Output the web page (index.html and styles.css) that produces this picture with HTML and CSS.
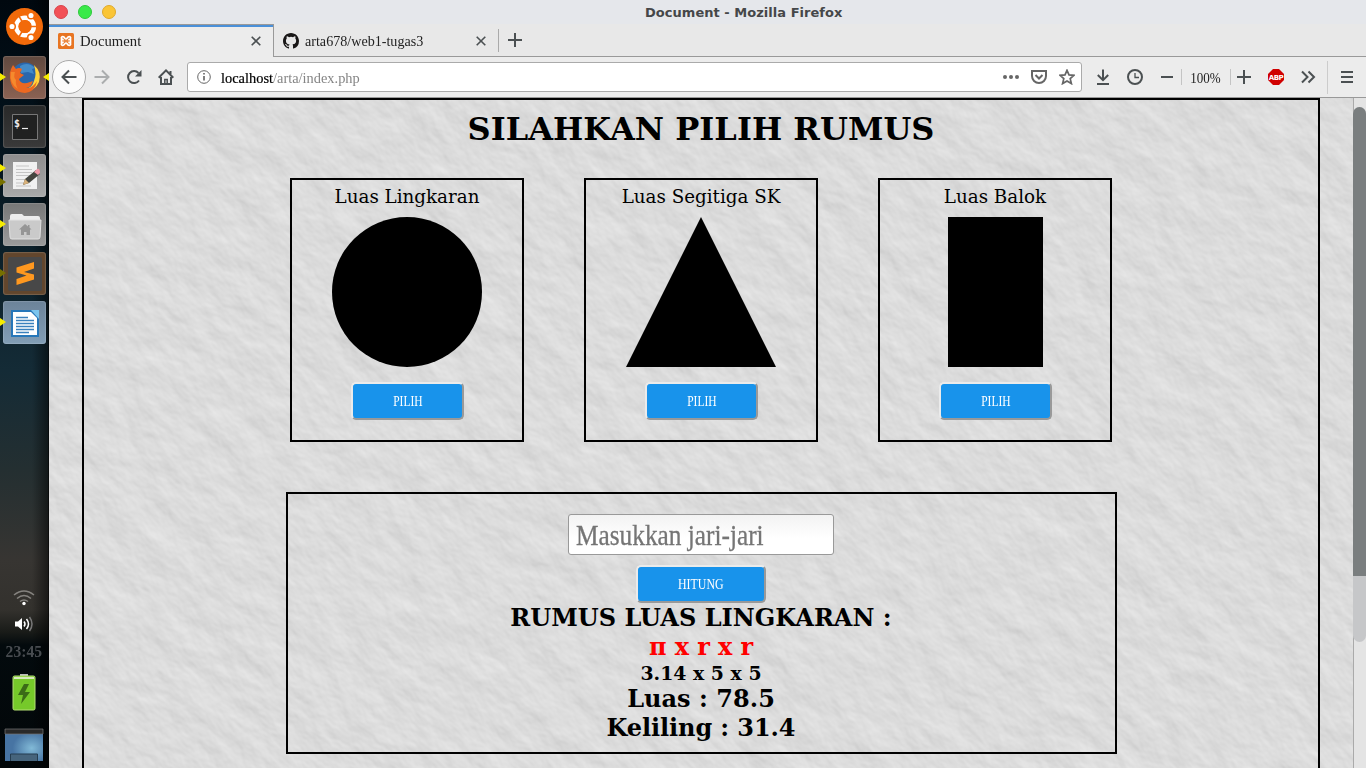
FILE: index.html
```
<!DOCTYPE html>
<html lang="id">
<head>
<meta charset="utf-8">
<title>Document</title>
<link rel="stylesheet" href="styles.css">
</head>
<body>
<div class="desktop">
  <aside class="launcher">
    <svg class="ubuntu" viewBox="0 0 50 50"><circle cx="24.500" cy="26.500" r="18.500" fill="#f26a0a"/><circle cx="25" cy="26.500" r="8.800" fill="none" stroke="#fff" stroke-width="4.500"/><g stroke="#f26a0a" stroke-width="1.500"><path d="M25 26.500l-7 12M25 26.500l-7-12M25 26.500h14" fill="none"/><circle cx="12" cy="26.500" r="3.300" fill="#fff"/><circle cx="31" cy="15.500" r="3.300" fill="#fff"/><circle cx="31" cy="37.500" r="3.300" fill="#fff"/></g><circle cx="25" cy="26.500" r="6.500" fill="#f26a0a"/></svg>
    <div class="tile tile-firefox"><i class="run"></i><i class="run active"></i>
      <svg viewBox="0 0 43 43"><circle cx="22" cy="20" r="13.500" fill="#2a67ad"/><path d="M17 10q8-5 15 2l-3 1 2 5-6-2-7 1z" fill="#438bc9"/><path d="M31 9q8 7 5 17-5 11-17 8 10-1 12-9 3-7 0-16z" fill="#ffd33c"/><path d="M8 13l2-4 3 4q3-2 6 0l-2 4 4 2-5 4q1 5 8 4l6-2q-2 7-7 7 6 1 11-7-2 11-12 12Q8 36 7 22q-1-5 1-9z" fill="#ec6821"/><path d="M8 16q-2 12 7 17-3-5-2-9-3-3-1-8z" fill="#f58a2d"/></svg></div>
    <div class="tile tile-terminal"><svg viewBox="0 0 43 43"><path d="M9.500 9.500h25v25h-25z" fill="#202121" stroke="#777" /><text x="11" y="22" class="prompt">$</text><path d="M19 23.500h6" stroke="#eee" stroke-width="1.200"/></svg></div>
    <div class="tile tile-editor"><i class="run high"></i><i class="run low dim"></i><svg viewBox="0 0 43 43"><path d="M10 8h24v27H10z" fill="#f1f1f1"/><path d="M13 12h13M13 15.500h16M13 18.500h16M13 21.500h14M13 25.500h9M13 29h8M13 32h15" stroke="#c5c5c5"/><path d="M20 31l2-6 11-9 4 4-11 9z" fill="#454640"/><path d="M20 31l2-6 4 4z" fill="#d8b17a"/><path d="M31 18l3-3q3-1 3 4l-2 2z" fill="#ed9aa9"/></svg></div>
    <div class="tile tile-files"><i class="run"></i><svg viewBox="0 0 43 43"><path d="M7 13q0-2 2-2h10l2 2h14q2 0 2 2v6H7z" fill="#ededed"/><path d="M6 17h32l-1 17q0 2-2 2H9q-2 0-2-2z" fill="#cacaca" stroke="#e2e2e2"/><path d="M22 21l-6 5.500h2V32h3v-3h2.500v3H27v-5.500h1.500l-2-2V22h-1.500v1.500z" fill="#969696"/></svg></div>
    <div class="tile tile-sublime"><i class="run dim"></i><svg viewBox="0 0 43 43"><rect x="5" y="5" width="34" height="34" rx="2" fill="#484848"/><path d="M13.500 15.500L31 10v6.500l-10 3.500 10 2.500v5L13.500 33v-6l10-3.500-10-3z" fill="#ff981f"/></svg></div>
    <div class="tile tile-writer"><i class="run"></i><svg viewBox="0 0 43 43"><path d="M8 9h28v27H8z" fill="#2777b9"/><path d="M10 11h18l6 6v17H10z" fill="#fff"/><path d="M28 9h8v9z" fill="#7dc5ed"/><path d="M13 16.500h12M13 19.500h18M13 22.500h18M13 25.500h18M13 28.500h18M13 31.500h13" stroke="#3a81bd" stroke-width="1.300"/></svg></div>
    <div class="tray">
      <svg class="wifi" viewBox="0 0 22 18"><g fill="none" stroke="#85837f" stroke-width="1.500"><path d="M1 6q10-8 20 0M4 9.500q7-6 14 0M7 12.500q4-3 8 0"/></g><circle cx="11" cy="14.500" r="1.700" fill="#fff"/></svg>
      <svg class="volume" viewBox="0 0 20 16"><path d="M1 5.500h3L8 2v12l-4-3.500H1z" fill="#fff"/><g fill="none" stroke="#fff" stroke-width="1.500"><path d="M10 5.500q2 2.500 0 5M12.500 3q4 5 0 10"/><path d="M15.500 1q5 7 0 14" stroke="#777"/></g></svg>
      <span class="clock">23:45</span>
      <svg class="battery" viewBox="0 0 24 40"><path d="M8 2h8v4H8z" fill="#bbb"/><rect x="1" y="4" width="22" height="34" rx="1.500" fill="#76c92a" stroke="#b4df74"/><path d="M2 5h20v2H2z" fill="#d7e8bd"/><path d="M12 12l-6 11h5l-2 9 9-12h-5l4-8z" fill="#3b6b17"/></svg>
      <svg class="show-desktop" viewBox="0 0 40 34"><defs><radialGradient id="desk" cx=".7" cy=".6"><stop offset="0" stop-color="#82bad7"/><stop offset="1" stop-color="#4774a3"/></radialGradient></defs><path d="M1 1h38v32H1z" fill="url(#desk)"/><path d="M1 1h38v5H1z" fill="#292929" stroke="#777" stroke-width=".7"/><path d="M6.500 33v-7h27v7" fill="#46647c" stroke="#253d50"/></svg>
    </div>
  </aside>

  <main class="browser">
    <header class="titlebar"><span class="dot red"></span><span class="dot green"></span><span class="dot yellow"></span><span class="window-title">Document - Mozilla Firefox</span></header>
    <nav class="tabs">
      <div class="tab selected"><svg class="favicon" viewBox="0 0 16 16"><rect width="16" height="16" rx="1.500" fill="#e87522"/><path d="M6 8h4M5.800 6.700C3 7 2.500 3.700 4.800 3.700S6.500 6 8 6s1-2.300 3.200-2.300S13 7 10.200 6.700M5.800 9.300C3 9 2.500 12.300 4.800 12.300S6.500 10 8 10s1 2.300 3.200 2.300S13 9 10.200 9.300M3.500 6v4M12.500 6v4" fill="none" stroke="#fff" stroke-width="1.700"/><path d="M6 8h4" stroke="#e87522" stroke-width="1.600"/></svg><span class="tab-label">Document</span><svg class="close" viewBox="0 0 10 10"><path d="M.7.700l8.600 8.600M9.300.700L.7 9.300"/></svg></div>
      <div class="tab"><svg class="favicon" viewBox="0 0 16 16"><path fill="#191717" d="M8 0C3.580 0 0 3.580 0 8c0 3.540 2.290 6.530 5.470 7.590.4.070.55-.17.550-.38v-1.490c-2.010.37-2.530-.49-2.690-.94-.09-.23-.48-.94-.82-1.130-.28-.15-.68-.52-.01-.53.63-.01 1.080.58 1.230.82.720 1.210 1.870.87 2.330.66.070-.52.280-.87.510-1.070-1.780-.2-3.640-.89-3.640-3.950 0-.87.310-1.590.82-2.150-.08-.2-.36-1.020.08-2.120 0 0 .67-.21 2.200.82a7.700 7.700 0 0 1 4 0c1.530-1.040 2.200-.82 2.200-.82.440 1.100.16 1.920.08 2.120.51.560.82 1.270.82 2.150 0 3.070-1.870 3.750-3.650 3.950.29.250.54.730.54 1.480v2.190c0 .21.150.46.550.38A8 8 0 0 0 16 8c0-4.420-3.580-8-8-8z"/></svg><span class="tab-label second">arta678/web1-tugas3</span><svg class="close" viewBox="0 0 10 10"><path d="M.7.700l8.600 8.600M9.300.700L.7 9.300"/></svg></div>
      <svg class="newtab" viewBox="0 0 14 14"><path d="M7 0v14M0 7h14"/></svg>
    </nav>
    <div class="toolbar">
      <span class="back"><svg class="icon" viewBox="0 0 16 16"><path d="M15.500 8H1.500M8 1.500L1.500 8 8 14.500"/></svg></span>
      <span class="cell fade"><svg class="icon" viewBox="0 0 16 16"><path d="M.5 8h14M8 1.500L14.500 8 8 14.500"/></svg></span>
      <span class="cell"><svg class="icon" viewBox="0 0 16 16"><path d="M13 11.500A6 6 0 1 1 12.500 4"/><path d="M15.500 1v6.500H9z" fill="#4b5052" stroke="none"/></svg></span>
      <span class="cell"><svg class="icon" viewBox="0 0 16 16"><path d="M.7 8.700L8 1.400l7.300 7.300M3 8v7h10V8M12.500 2v3"/><path d="M6.800 15v-4.500h2.400V15" stroke-width="1.500"/></svg></span>
      <div class="urlbar"><svg class="info" viewBox="0 0 14 14"><circle cx="7" cy="7" r="6.300" fill="none" stroke="#666"/><path d="M7 6v4.500M7 3v1.600" stroke="#555" stroke-width="1.500"/></svg><span class="url"><b>localhost</b>/arta/index.php</span><svg class="icon dots" viewBox="0 0 16 16"><circle cx="2" cy="8" r="2"/><circle cx="8" cy="8" r="2"/><circle cx="14" cy="8" r="2"/></svg><svg class="icon pocket" viewBox="0 0 16 16"><path d="M1 2h14v5a7 7 0 0 1-14 0zM4.500 6L8 9.500 11.500 6"/></svg><svg class="icon star" viewBox="0 0 16 16"><path d="M8 1.300l2 4.600 5 .4-3.800 3.300 1.200 5L8 12l-4.400 2.600 1.200-5L1 6.300l5-.4z"/></svg></div>
      <span class="cell"><svg class="icon" viewBox="0 0 16 16"><path d="M8 .5V11M2.800 6L8 11.200 13.200 6M2 15h12"/></svg></span>
      <span class="cell"><svg class="icon" viewBox="0 0 16 16"><circle cx="8" cy="8" r="7"/><path d="M8 4v4.500h4" stroke-width="1.300"/></svg></span>
      <span class="cell minus"><svg class="icon" viewBox="0 0 16 16"><path d="M2 8h12"/></svg></span>
      <span class="zoom"><span>100%</span></span>
      <span class="cell plus"><svg class="icon" viewBox="0 0 16 16"><path d="M8 1v14M1 8h14"/></svg></span>
      <span class="cell"><svg class="icon" viewBox="0 0 16 16"><path d="M5 0h6l5 5v6l-5 5H5l-5-5V5z" fill="#d00000" stroke="none"/><text x="8" y="10.800" class="abp">ABP</text></svg></span>
      <span class="cell"><svg class="icon" viewBox="0 0 16 16"><path d="M2 2.500L7.500 8 2 13.500M8.500 2.500L14 8l-5.500 5.500"/></svg></span>
      <span class="menu"><svg class="icon" viewBox="0 0 16 16"><path d="M2 3h12M2 8h12M2 13h12"/></svg></span>
    </div>

    <div class="viewport">
      <section class="page">
        <svg class="plaster" width="1304" height="670"><filter id="plaster" x="0" y="0" width="100%" height="100%" color-interpolation-filters="sRGB"><feTurbulence type="fractalNoise" baseFrequency=".026 .038" numOctaves="4" seed="8"/><feDiffuseLighting surfaceScale=".85" diffuseConstant="1.010" lighting-color="#f0f0f0"><feDistantLight azimuth="250" elevation="65"/></feDiffuseLighting></filter><rect x="-400" y="-900" width="2200" height="2200" transform="rotate(45 652 335)" filter="url(#plaster)"/></svg>
        <div class="frame">
          <h1>SILAHKAN PILIH RUMUS</h1>
          <div class="cards">
            <div class="card"><p>Luas Lingkaran</p><div class="circle"></div><button><span>PILIH</span></button></div>
            <div class="card"><p>Luas Segitiga SK</p><div class="triangle"></div><button><span>PILIH</span></button></div>
            <div class="card"><p>Luas Balok</p><div class="block"></div><button><span>PILIH</span></button></div>
          </div>
          <div class="result">
            <div class="field"><span>Masukkan jari-jari</span></div>
            <button class="calc"><span>HITUNG</span></button>
            <h2>RUMUS LUAS LINGKARAN :</h2>
            <h2 class="formula">п x r x r</h2>
            <h3>3.14 x 5 x 5</h3>
            <h2>Luas : 78.5</h2>
            <h2 class="perimeter">Keliling : 31.4</h2>
          </div>
        </div>
      </section>
      <div class="scrollbar"><div class="track"><div class="thumb"></div></div></div>
    </div>
  </main>
</div>
</body>
</html>
```
FILE: styles.css
```
* { box-sizing: border-box; }
body { margin: 0; overflow: hidden; font-family: "DejaVu Serif", serif; color: #000; }
h1, h2, h3, p { margin: 0; }
svg { display: block; flex: none; }
.desktop { display: flex; width: 1366px; height: 768px; }

/* launcher */
.launcher { width: 49px; flex: none; display: flex; flex-direction: column; align-items: center; background: linear-gradient(90deg, transparent 32px, rgba(0,0,0,.5) 48px, #000), linear-gradient(#00080f 0, #021019 110px, #0b1f29 250px, #142b36 370px, #242f31 470px, #373532 560px, #33312d 610px, #191b18 632px, #030a0d 645px, #020709 768px); }
.ubuntu { width: 50px; height: 50px; margin-bottom: 6px; }
.tile { position: relative; width: 43px; height: 43px; flex: none; margin-bottom: 6px; border-radius: 3px; box-shadow: inset 0 0 0 1px rgba(255,255,255,.1), inset 0 0 3px rgba(255,255,255,.1); }
.tile svg { width: 43px; height: 43px; }
.tile-firefox { background: linear-gradient(#60493f, #8b6253); }
.tile-terminal { background: linear-gradient(#282929, #3a3a3a); }
.tile-editor { background: linear-gradient(#8d8d8d, #aaa); }
.tile-files { background: linear-gradient(#777, #9b9b9b); }
.tile-sublime { background: #62462d; }
.tile-writer { background: linear-gradient(#6c8399, #829eb6); }
.run { position: absolute; left: -3px; top: 17px; border: solid transparent; border-width: 4.500px 0 4.500px 6px; border-left-color: #f6ec00; }
.run.active { left: auto; right: -3px; border-width: 4.500px 6px 4.500px 0; border-right-color: #f6ec00; }
.run.high { top: 10px; }
.run.low { top: 24px; }
.run.dim { border-left-color: #777000; }
.prompt { font: bold 10px "DejaVu Sans Mono", monospace; fill: #eee; }
.tray { margin: 239px 1px 0 0; display: flex; flex-direction: column; align-items: center; }
.wifi { width: 22px; height: 18px; }
.volume { width: 20px; height: 16px; margin-top: 9px; }
.clock { margin-top: 10px; height: 20px; font: bold 17px/20px "Liberation Serif", serif; color: #484c50; transform: scaleX(.92); }
.battery { width: 26px; height: 40px; margin-top: 10px; }
.show-desktop { width: 40px; height: 34px; margin-top: 16px; }

/* browser chrome */
.browser { width: 1317px; display: flex; flex-direction: column; }
.titlebar { height: 24px; background: #e5e7eb; display: flex; align-items: center; gap: 10px; padding-left: 5px; }
.dot { width: 14px; height: 14px; border-radius: 50%; }
.red { background: #f25056; border: 1px solid #d8454c; }
.green { background: #39ea49; border: 1px solid #2dc83b; }
.yellow { background: #fac536; border: 1px solid #dfa92c; }
.window-title { font: bold 13px "DejaVu Sans", sans-serif; letter-spacing: .03px; color: #454749; margin-left: 519px; white-space: nowrap; }
.tabs { height: 33px; background: #e8e8e8; display: flex; }
.tab { width: 225px; border-bottom: 1px solid #999; display: flex; align-items: center; padding: 2px 13px 0 9px; }
.tab.selected { background: #ececec; border-top: 1px solid #999; box-shadow: inset 0 2px #4a90d9; border-right: 1px solid #999; border-bottom: 0; padding: 0 12px 0 9px; }
.favicon { width: 16px; height: 16px; }
.tab-label { font: 15px "Liberation Serif", serif; color: #222; margin-left: 6px; flex: 1; white-space: nowrap; transform: scaleX(.98); transform-origin: 0; }
.tab-label.second { transform: scaleX(.94); }
.close { width: 10px; height: 10px; stroke: #4b5052; stroke-width: 1.600; }
.newtab { height: 33px; flex: 1; margin-left: -1px; border-bottom: 1px solid #999; stroke: #4b5052; stroke-width: 2; }
.newtab { padding: 9px 844px 9px 10px; background: linear-gradient(#aaa, #aaa) 0 5px / 1px 23px no-repeat; }
.toolbar { height: 41px; background: #ececec; border-bottom: 1px solid #999; display: flex; align-items: center; padding-left: 3px; color: #4b5052; }
.icon { width: 16px; height: 16px; fill: none; stroke: #4b5052; stroke-width: 2; }
.back { width: 34px; height: 34px; border: 1px solid #aaa; border-radius: 50%; background: #fbfbfb; display: grid; place-items: center; }
.cell { width: 32px; flex: none; display: grid; place-items: center; }
.fade { opacity: .4; }
.urlbar { width: 895px; height: 30px; margin: 0 5px; background: #fff; border: 1px solid #aaa; border-radius: 3px; display: flex; align-items: center; padding: 0 6px 0 9px; }
.info { width: 14px; height: 14px; }
.url { font: 15px/18px "Liberation Serif", serif; color: #858585; margin: 2px 0 0 10px; flex: 1; white-space: nowrap; transform: scaleX(.96); transform-origin: 0; }
.url b { font-weight: 400; color: #000; -webkit-text-stroke: .2px #000; }
.dots { fill: #666; stroke: none; }
.pocket { margin-left: 12px; stroke: #666; }
.star { margin-left: 12px; stroke: #666; stroke-width: 1.700; }
.minus { width: 30px; padding-left: 2px; }
.zoom { width: 50px; height: 16px; border: solid #c4c4c4; border-width: 0 1px; text-align: center; font: 15px/18px "Liberation Serif", serif; color: #222; }
.zoom span { display: inline-block; transform: scaleX(.87); margin: 0 -3px 0 -5px; }
.plus { width: 26px; }
.plus + .cell { margin-left: 3px; }
.abp { font: bold 7px "DejaVu Sans", sans-serif; fill: #fff; stroke: none; text-anchor: middle; letter-spacing: -.4px; }
.menu { margin-left: auto; width: 39px; height: 33px; border-left: 1px solid #ccc; display: grid; place-items: center; }

/* page */
.viewport { height: 670px; display: flex; overflow: hidden; }
.page { position: relative; width: 1304px; overflow: hidden; background: #dbdbdb; padding: 0 33px; }
.plaster { position: absolute; inset: 0; }
.frame { position: relative; width: 1238px; height: 700px; border: 2px solid #000; display: flex; flex-direction: column; align-items: center; padding-top: 10px; }
h1 { font-size: 32px; line-height: 38px; white-space: nowrap; letter-spacing: .04px; }
.cards { display: flex; gap: 60px; margin-top: 30px; }
.card { width: 234px; height: 264px; border: 2px solid #000; display: flex; flex-direction: column; align-items: center; padding-top: 6px; }
.card p { font-size: 18.300px; line-height: 21px; margin-bottom: 10px; }
.circle { width: 150px; height: 150px; border-radius: 50%; background: #000; }
.triangle { width: 150px; height: 150px; background: #000; clip-path: polygon(50% 0, 100% 100%, 0 100%); }
.block { width: 95px; height: 150px; background: #000; }
button { width: 113px; height: 38px; padding: 1px 0 0; margin-top: 15px; margin-left: 1px; border: 2px solid; border-color: #ebebeb #999 #999 #ebebeb; border-radius: 5px; background: #1893eb; color: #fff; font: 14px "Liberation Serif", serif; }
button span { display: inline-block; transform: scaleX(.82); }
.calc span { transform: scaleX(.85); }
.result { width: 831px; height: 262px; margin: 50px 0 0 1px; border: 2px solid #000; display: flex; flex-direction: column; align-items: center; padding: 20px 1px 0 0; }
.field { width: 266px; height: 41px; border: 1px solid #999; border-radius: 3px; background: linear-gradient(#f3f3f3, #fff 60%); font: 28.500px/41px "Liberation Serif", serif; color: #757575; padding-left: 7px; white-space: nowrap; }
.field span { display: inline-block; transform: scaleX(.888); transform-origin: 0; -webkit-text-stroke: .3px #757575; }
button.calc { width: 130px; margin: 10px 0 0; }
h2 { font-size: 24px; line-height: 29px; letter-spacing: .03px; }
.formula { color: #f00; letter-spacing: -.1px; }
.perimeter { letter-spacing: -.1px; }
h3 { font-size: 18.900px; line-height: 23px; padding-top: 1px; margin-bottom: -1px; }

.scrollbar { width: 13px; background: #e4e4e4; border-left: 1px solid #aaa; padding-top: 9px; }
.track { width: 13px; height: 535px; margin-left: -1px; border-radius: 7px; background: #c6c7c9; overflow: hidden; }
.thumb { height: 469px; background: #7a7e7f; }
```
